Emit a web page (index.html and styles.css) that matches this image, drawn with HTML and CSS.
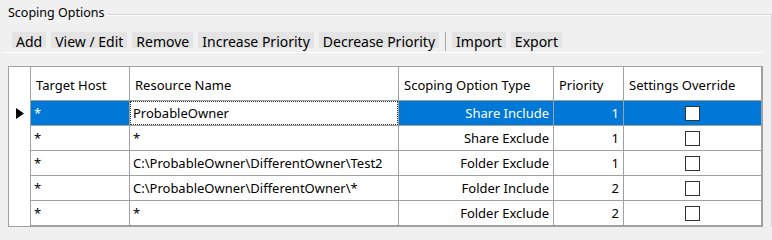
FILE: index.html
```html
<!DOCTYPE html>
<html lang="en">
<head>
<meta charset="utf-8">
<title>Scoping Options</title>
<link rel="stylesheet" href="styles.css">
</head>
<body>
<div class="group">
  <div class="group-title"><span class="title">Scoping Options</span><span class="rule"></span></div>
  <div class="group-body">
    <div class="toolbar">
      <span class="tb-btn">Add</span>
      <span class="tb-btn">View / Edit</span>
      <span class="tb-btn">Remove</span>
      <span class="tb-btn">Increase Priority</span>
      <span class="tb-btn">Decrease Priority</span>
      <span class="tb-sep"></span>
      <span class="tb-btn">Import</span>
      <span class="tb-btn">Export</span>
    </div>
    <div class="grid">
      <div class="cell rh"></div>
      <div class="cell hd">Target Host</div>
      <div class="cell hd">Resource Name</div>
      <div class="cell hd">Scoping Option Type</div>
      <div class="cell hd">Priority</div>
      <div class="cell hd">Settings Override</div>

      <div class="cell rh"><svg class="arrow" width="8" height="11" viewBox="0 0 8 11"><polygon points="0,0 8,5.5 0,11" fill="#000"/></svg></div>
      <div class="cell sel">*</div>
      <div class="cell focus">ProbableOwner</div>
      <div class="cell sel right">Share Include</div>
      <div class="cell sel right">1</div>
      <div class="cell sel center"><span class="chk"></span></div>

      <div class="cell rh"></div>
      <div class="cell">*</div>
      <div class="cell">*</div>
      <div class="cell right">Share Exclude</div>
      <div class="cell right">1</div>
      <div class="cell center"><span class="chk"></span></div>

      <div class="cell rh"></div>
      <div class="cell">*</div>
      <div class="cell">C:\ProbableOwner\DifferentOwner\Test2</div>
      <div class="cell right">Folder Exclude</div>
      <div class="cell right">1</div>
      <div class="cell center"><span class="chk"></span></div>

      <div class="cell rh"></div>
      <div class="cell">*</div>
      <div class="cell">C:\ProbableOwner\DifferentOwner\*</div>
      <div class="cell right">Folder Include</div>
      <div class="cell right">2</div>
      <div class="cell center"><span class="chk"></span></div>

      <div class="cell rh"></div>
      <div class="cell">*</div>
      <div class="cell">*</div>
      <div class="cell right">Folder Exclude</div>
      <div class="cell right">2</div>
      <div class="cell center"><span class="chk"></span></div>
    </div>
  </div>
</div>
</body>
</html>
```
FILE: styles.css
```css
* { box-sizing: border-box; }
html, body {
  margin: 0;
  padding: 0;
  background: #f0f0f0;
  width: 772px;
  height: 227px;
  overflow: hidden;
  font-family: "Noto Sans", "Open Sans", sans-serif;
  color: #000;
}
.group {
  width: 772px;
  height: 227px;
}
.group-title {
  display: flex;
  align-items: flex-start;
  height: 28px;
}
.title {
  font-size: 12.5px;
  line-height: 26px;
  padding-left: 8px;
  padding-right: 4px;
  white-space: nowrap;
}
.rule {
  flex: 1;
  margin-top: 14px;
  height: 14px;
  border-top: 1px solid #d5d5d5;
  border-right: 1px solid #d5d5d5;
  box-shadow: inset 0 1px 0 #ffffff;
}
.group-body {
  border-right: 1px solid #d5d5d5;
  padding-right: 8px;
  height: 199px;
}
.toolbar {
  margin-left: 3px;
  height: 25px;
  padding: 4px 0 0 9px;
  border-bottom: 1px solid #ffffff;
  display: flex;
  align-items: flex-start;
  gap: 5px;
  font-size: 14px;
}
.tb-btn {
  display: block;
  height: 16px;
  line-height: 19px;
  padding: 0 4px;
  background: #e4e4e4;
  white-space: nowrap;
}
.tb-sep {
  display: block;
  width: 1px;
  height: 19px;
  background: #a8a8a8;
  margin: 0 1px;
}
.grid {
  margin-top: 13px;
  margin-left: 8px;
  display: grid;
  grid-template-columns: 22px 99px 269px 155px 70px 138px;
  grid-template-rows: 34px repeat(5, 25px);
  width: 755px;
  border: 1px solid #a0a0a0;
  background: #ffffff;
  font-size: 13px;
}
.cell {
  display: flex;
  align-items: center;
  padding: 0 3px;
  border-right: 1px solid #a0a0a0;
  border-bottom: 1px solid #a0a0a0;
  white-space: nowrap;
  overflow: hidden;
}
.hd {
  padding-left: 5px;
  padding-top: 2px;
}
.rh {
  border-bottom: none;
  justify-content: center;
  padding: 0;
}
.right {
  justify-content: flex-end;
  padding-right: 4px;
}
.center {
  justify-content: center;
}
.sel {
  background: #0078d7;
  color: #ffffff;
}
.focus {
  position: relative;
  background: #ffffff;
  color: #000;
}
.focus::after {
  content: "";
  position: absolute;
  inset: 0;
  border: 1px dotted #333;
}
.chk {
  display: block;
  width: 15px;
  height: 15px;
  border: 1px solid #333;
  background: #ffffff;
}
.arrow {
  display: block;
}
```
